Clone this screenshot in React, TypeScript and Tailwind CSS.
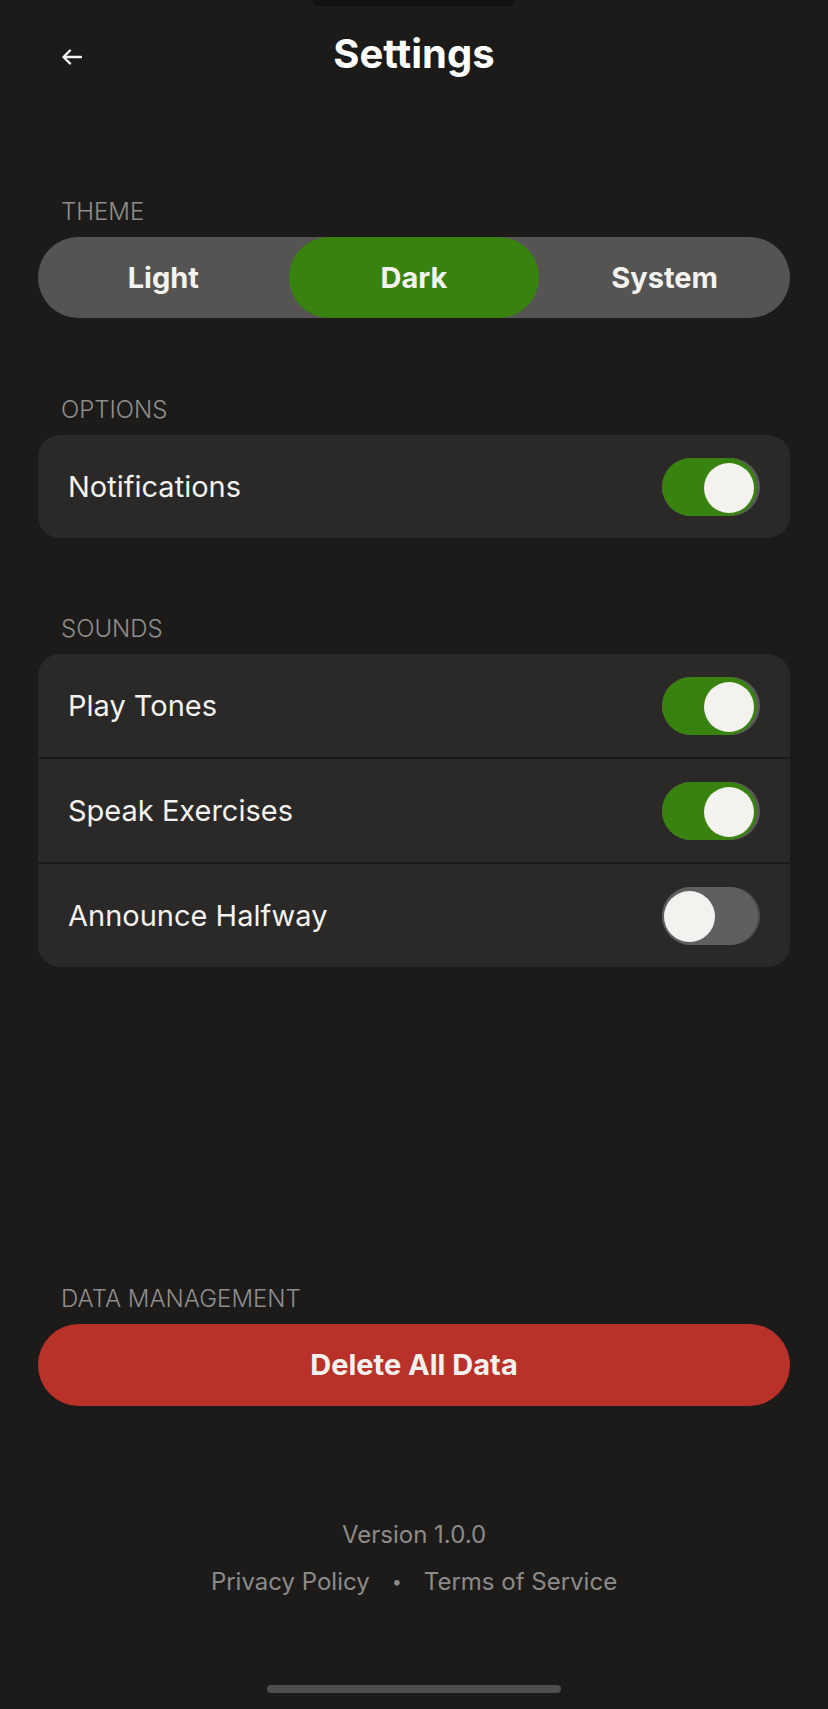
import { useState } from "react";

type Theme = "Light" | "Dark" | "System";

function Toggle({ on, onChange }: { on: boolean; onChange: () => void }) {
  return (
    <button
      onClick={onChange}
      className={`relative h-[58px] w-[98px] shrink-0 rounded-full ${
        on ? "bg-[#5a5958]" : "bg-[#4f4e4d]"
      }`}
    >
      <span
        className={`absolute inset-y-0 left-0 rounded-full ${
          on ? "w-[95px] bg-[#38820f]" : "w-[96px] bg-[#605f5e]"
        }`}
      />
      <span
        className={`absolute rounded-full bg-[#f4f2ef] ${
          on
            ? "left-[42px] top-[5px] h-[50px] w-[50px]"
            : "left-[2px] top-[4px] h-[51px] w-[51px]"
        }`}
      />
    </button>
  );
}

function SectionLabel({ children }: { children: string }) {
  return (
    <p className="px-[23px] text-[24px] font-light uppercase leading-[28px] text-[#8f8e8c]">
      {children}
    </p>
  );
}

function Row({
  label,
  on,
  onChange,
}: {
  label: string;
  on: boolean;
  onChange: () => void;
}) {
  return (
    <div className="flex h-[103px] items-center justify-between pl-[30px] pr-[30px]">
      <span className="text-[29px] leading-none text-[#f4f2ef]">{label}</span>
      <Toggle on={on} onChange={onChange} />
    </div>
  );
}

export default function App() {
  const [theme, setTheme] = useState<Theme>("Dark");
  const [notifications, setNotifications] = useState(true);
  const [sounds, setSounds] = useState({
    tones: true,
    speak: true,
    halfway: false,
  });

  return (
    <div
      className="relative flex h-[1709px] w-[828px] flex-col overflow-hidden bg-[#1c1b1a] px-[38px]"
      style={{ fontFamily: "Inter, 'Noto Sans', sans-serif" }}
    >
      {/* notch */}
      <div className="absolute left-[313px] top-0 h-[6px] w-[202px] rounded-b-[6px] bg-[#111110]" />

      <header className="grid h-[108px] grid-cols-[1fr_auto_1fr] items-center">
        <button className="mt-[6px] flex w-fit pl-[24px] text-[#f4f2ef]">
          <svg width="20" height="16" viewBox="0 0 20 16" fill="none">
            <path
              d="M19 8H2M8 1.5L1.5 8L8 14.5"
              stroke="currentColor"
              strokeWidth="2.4"
              strokeLinecap="round"
              strokeLinejoin="round"
            />
          </svg>
        </button>
        <h1 className="text-[40px] font-bold leading-none text-white">
          Settings
        </h1>
        <div />
      </header>

      <section className="mt-[90px]">
        <SectionLabel>Theme</SectionLabel>
        <div className="mt-[11px] grid h-[81px] grid-cols-3 rounded-full bg-[#555453]">
          {(["Light", "Dark", "System"] as Theme[]).map((t) => (
            <button
              key={t}
              onClick={() => setTheme(t)}
              className={`rounded-full text-[29px] font-bold text-[#f4f2ef] ${
                theme === t ? "bg-[#38820f]" : ""
              }`}
            >
              {t}
            </button>
          ))}
        </div>
      </section>

      <section className="mt-[78px]">
        <SectionLabel>Options</SectionLabel>
        <div className="mt-[11px] overflow-hidden rounded-[22px] bg-[#2a2928]">
          <Row
            label="Notifications"
            on={notifications}
            onChange={() => setNotifications((v) => !v)}
          />
        </div>
      </section>

      <section className="mt-[77px]">
        <SectionLabel>Sounds</SectionLabel>
        <div className="mt-[11px] flex flex-col gap-[2px] overflow-hidden rounded-[22px] bg-[#1c1b1a]">
          <div className="bg-[#2a2928]">
            <Row
              label="Play Tones"
              on={sounds.tones}
              onChange={() => setSounds((s) => ({ ...s, tones: !s.tones }))}
            />
          </div>
          <div className="bg-[#2a2928]">
            <Row
              label="Speak Exercises"
              on={sounds.speak}
              onChange={() => setSounds((s) => ({ ...s, speak: !s.speak }))}
            />
          </div>
          <div className="bg-[#2a2928]">
            <Row
              label="Announce Halfway"
              on={sounds.halfway}
              onChange={() =>
                setSounds((s) => ({ ...s, halfway: !s.halfway }))
              }
            />
          </div>
        </div>
      </section>

      <section className="mt-[318px]">
        <SectionLabel>Data Management</SectionLabel>
        <button className="mt-[11px] h-[82px] w-full rounded-full bg-[#b83229] text-[29px] font-bold text-[#f4f2ef]">
          Delete All Data
        </button>
      </section>

      <footer className="mt-[114px] flex flex-col items-center text-[24px] leading-[30px] text-[#8c8b89]">
        <p>Version 1.0.0</p>
        <div className="mt-[17px] flex items-center gap-[22px]">
          <a>Privacy Policy</a>
          <span className="text-[18px]">•</span>
          <a>Terms of Service</a>
        </div>
      </footer>

      {/* home indicator */}
      <div className="absolute bottom-[16px] left-[267px] h-[8px] w-[294px] rounded-full bg-[#4f4e4d]" />
    </div>
  );
}
